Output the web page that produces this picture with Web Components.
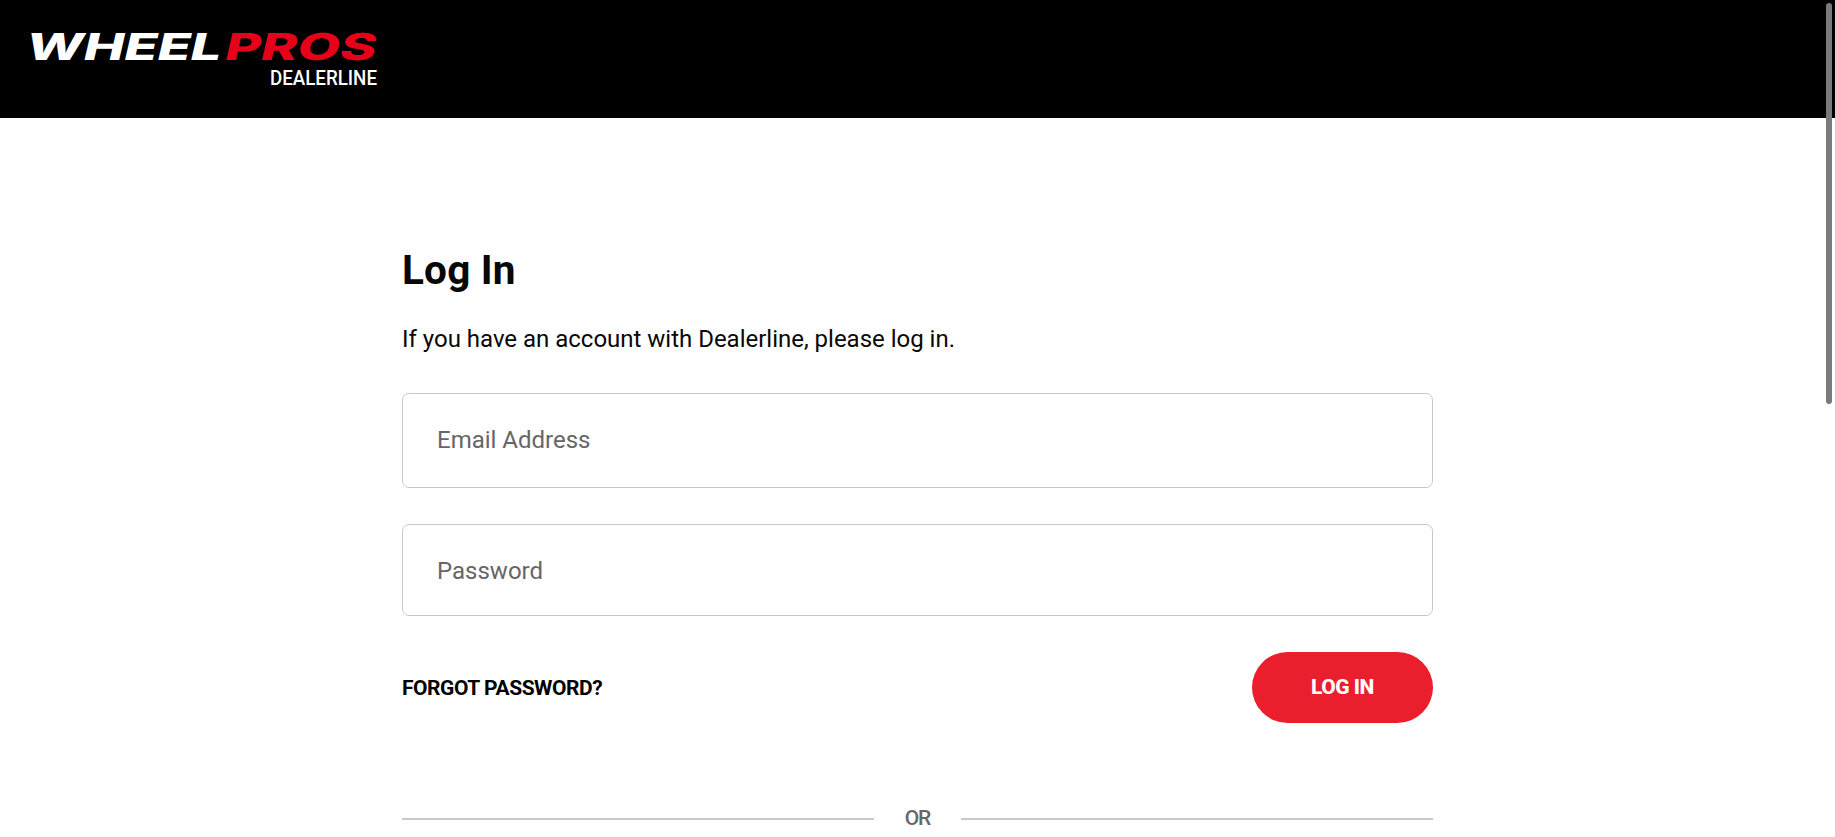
<!DOCTYPE html>
<html lang="en"><head><meta charset="utf-8"><title>Log In</title>
<style>html,body{margin:0;height:100%;overflow:hidden;background:#fff}body{font-family:Roboto,"Liberation Sans",sans-serif;color:#000}</style></head>
<body>
<dealer-page>
<dealer-header slot="header"></dealer-header>
<login-form></login-form>
</dealer-page>
<script>
const define=(name,html)=>customElements.define(name,class extends HTMLElement{
  constructor(){super();this.attachShadow({mode:'open'}).innerHTML=html;}
});
define('brand-logo',`<style>:host{display:block;width:385px;height:90px}svg{display:block;overflow:visible}
.mark{font:800 37px Inter,Roboto,sans-serif}.sub{font:500 20.3px Roboto,sans-serif}</style>
<svg width="385" height="90" viewBox="-25 -25 385 90" role="img">
<g transform="translate(0 34.7) skewX(-13)"><text class="mark" fill="#fff" x="-1" y="0" textLength="195" lengthAdjust="spacingAndGlyphs">WHEEL</text>
<text class="mark" fill="#e60019" x="198" y="0" textLength="151" lengthAdjust="spacingAndGlyphs">PROS</text></g>
<text class="sub" fill="#fff" x="245" y="60" textLength="107" lengthAdjust="spacingAndGlyphs">DEALERLINE</text></svg>`);
define('dealer-header',`<style>:host{display:block;box-sizing:border-box;height:118px;background:#000}</style><brand-logo></brand-logo>`);
define('scroll-thumb',`<style>:host{display:block;position:absolute;top:3px;right:3px;width:6px;height:401px;border-radius:3px;background:#7a7a7a}</style>`);
define('dealer-page',`<style>:host{display:block;position:relative;height:837px;overflow:hidden}main{width:1031px;margin:0 auto;padding-top:128px}</style>
<slot name="header"></slot><main><slot></slot></main><scroll-thumb></scroll-thumb>`);
define('text-field',`<style>:host{display:flex;align-items:center;box-sizing:border-box;height:95px;padding:0 34px 2px;border:1px solid #c8c8c8;border-radius:7px;color:#666;font-size:24px}</style><slot></slot>`);
define('pill-button',`<style>:host{display:flex;align-items:center;justify-content:center;box-sizing:border-box;width:181px;height:71px;padding-bottom:2px;border-radius:36px;background:#eb1e2e;color:#fff;font-size:21px;font-weight:800}span{letter-spacing:-.5px}</style><span><slot></slot></span>`);
define('or-divider',`<style>:host{display:flex;align-items:center;height:24px;color:#666;font-size:21px;font-weight:500}i{height:2px;flex:1;background:#c8c8c8}b{font-weight:inherit;width:87px;text-align:center;position:relative;top:-1px;letter-spacing:-1px}</style><i></i><b>OR</b><i></i>`);
define('login-form',`<style>:host{display:block}
h1{margin:0;font-size:40.5px;line-height:48px;font-weight:700;letter-spacing:.2px;color:#080808}
p{margin:29px 0 0;font-size:24px;line-height:32px;letter-spacing:-.01px;color:#080808}
text-field{margin-top:38px}.pw{height:92px;margin-top:36px;padding-top:2px;padding-bottom:0}
.row{display:flex;align-items:center;justify-content:space-between;margin-top:36px}
a{font-size:21px;font-weight:700;line-height:24px;letter-spacing:-.45px}
or-divider{margin-top:84px}</style>
<h1>Log In</h1><p>If you have an account with Dealerline, please log in.</p>
<text-field>Email Address</text-field><text-field class="pw">Password</text-field>
<div class="row"><a>FORGOT PASSWORD?</a><pill-button>LOG IN</pill-button></div>
<or-divider></or-divider>`);
</script></body></html>
